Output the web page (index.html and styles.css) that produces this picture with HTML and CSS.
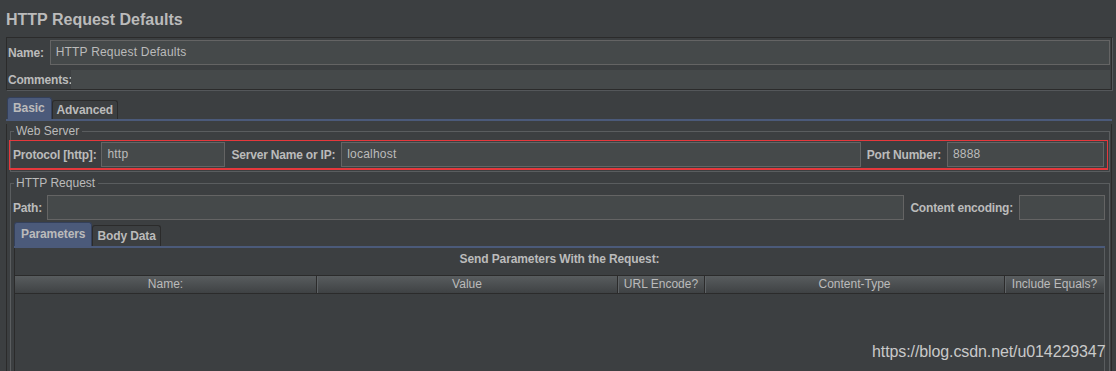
FILE: index.html
```html
<!DOCTYPE html>
<html lang="en">
<head>
    <meta charset="UTF-8">
    <title>HTTP Request Defaults</title>
    <link rel="stylesheet" href="styles.css">
</head>
<body>
    <div class="page">
        <h1 class="title">HTTP Request Defaults</h1>

        <!-- name / comments -->
        <div class="info-panel">
            <div class="field-row name-row">
                <span class="label">Name:</span>
                <div class="text-field">HTTP Request Defaults</div>
            </div>
            <div class="field-row comments-row">
                <span class="label">Comments:</span>
                <div class="comments-area"></div>
            </div>
        </div>

        <div class="tab-strip main-tabs">
            <div class="tab active">Basic</div>
            <div class="tab">Advanced</div>
        </div>

        <div class="tab-body">
            <fieldset class="group web-server">
                <legend>Web Server</legend>
                <div class="field-row server-row">
                    <span class="label">Protocol [http]:</span>
                    <div class="text-field protocol-field">http</div>
                    <span class="label gap-label">Server Name or IP:</span>
                    <div class="text-field server-field">localhost</div>
                    <span class="label gap-label">Port Number:</span>
                    <div class="text-field port-field">8888</div>
                </div>
            </fieldset>

            <fieldset class="group http-request">
                <legend>HTTP Request</legend>
                <div class="field-row path-row">
                    <span class="label">Path:</span>
                    <div class="text-field path-field"></div>
                    <span class="label gap-label">Content encoding:</span>
                    <div class="text-field encoding-field"></div>
                </div>

                <div class="tab-strip sub-tabs">
                    <div class="tab active">Parameters</div>
                    <div class="tab">Body Data</div>
                </div>

                <div class="params">
                    <div class="params-title">Send Parameters With the Request:</div>
                    <div class="table-head">
                        <div class="head-cell">Name:</div>
                        <div class="head-cell">Value</div>
                        <div class="head-cell">URL Encode?</div>
                        <div class="head-cell">Content-Type</div>
                        <div class="head-cell">Include Equals?</div>
                    </div>
                    <div class="table-rows"></div>
                </div>
            </fieldset>
        </div>

        <div class="watermark">https://blog.csdn.net/u014229347</div>
    </div>
</body>
</html>
```

FILE: styles.css
```css
* {
    box-sizing: border-box;
}

body {
    margin: 0;
    height: 371px;
    overflow: hidden;
    background-color: #3c3f41;
    color: #bbbbbb;
    font-family: "Liberation Sans", Arial, sans-serif;
    font-size: 12px;
}

.page {
    position: relative;
    padding: 0 4px 0 6px;
}

.title {
    margin: 0;
    padding-top: 10px;
    font-size: 16px;
    line-height: 20px;
    font-weight: bold;
}

/* name + comments box */
.info-panel {
    margin-top: 7px;
    border: 1px solid #2b2b2b;
    box-shadow: 1px 1px 0 #54575a;
    padding: 2px 1px 0;
}

.field-row {
    display: flex;
    align-items: center;
}

.label {
    font-weight: bold;
    white-space: nowrap;
    letter-spacing: -0.2px;
}

.text-field {
    height: 25px;
    line-height: 23px;
    padding: 0 5px;
    background-color: #45494a;
    border: 1px solid #646464;
    letter-spacing: 0.2px;
    white-space: nowrap;
    overflow: hidden;
}

.name-row .text-field {
    flex: 1;
    margin-left: 6px;
}

.comments-row {
    margin-top: 5px;
    height: 19px;
}
.comments-area {
    flex: 1;
    align-self: stretch;
    margin-left: -1px;
    background-color: #45494a;
}

/* tabs */
.tab-strip {
    display: flex;
    align-items: flex-end;
    border-bottom: 2px solid #4b5a7a;
}

.tab {
    height: 19px;
    line-height: 18px;
    padding: 0 4px;
    font-weight: bold;
    letter-spacing: -0.1px;
    border: 1px solid #2b2b2b;
    border-bottom: none;
    border-radius: 3px 3px 0 0;
}
.tab.active {
    height: 22px;
    line-height: 21px;
    padding: 0 6px 0 5px;
    background-color: #4b5a7a;
    border-color: #34405a;
}

.main-tabs {
    margin-top: 7px;
    padding-left: 1px;
}

.tab-body {
    border-left: 1px solid #2b2b2b;
    border-right: 1px solid #2b2b2b;
    padding: 0 1px 0 3px;
    height: 260px;
}

/* titled borders */
.group {
    min-width: 0;
    margin: 0;
    border: 1px solid #5a5d5f;
}
.group legend {
    margin-left: 3px;
    padding: 0 3px 0 2px;
    line-height: 15px;
}

.web-server {
    margin-top: 3px;
    padding: 1px 0 1px;
}

.server-row {
    margin: 0 1px 0 -2px;
    padding: 1px 3px;
    border: 1px solid #e5383c;
    border-bottom-width: 2px;
}

.gap-label {
    margin-left: 6px;
}
.protocol-field {
    flex: 0 0 124px;
    margin-left: 5px;
}
.server-field {
    flex: 1;
    margin-left: 6px;
}
.port-field {
    flex: 0 0 157px;
    margin-left: 6px;
}

.http-request {
    margin-top: 4px;
    padding: 4px 0 0;
}

.path-row {
    padding: 0 4px 0 2px;
}
.path-field {
    flex: 1;
    margin-left: 5px;
}
.encoding-field {
    flex: 0 0 86px;
    margin-left: 6px;
}

.sub-tabs {
    margin: 2px 4px 0 3px;
}
.sub-tabs .tab {
    height: 21px;
    line-height: 20px;
}
.sub-tabs .tab.active {
    height: 24px;
    line-height: 23px;
    padding: 0 6px;
}

/* parameters table */
.params {
    margin: 0 4px 0 3px;
    border-left: 1px solid #2b2b2b;
    border-right: 1px solid #5a5d5f;
    height: 140px;
}

.params-title {
    padding-top: 4px;
    line-height: 15px;
    text-align: center;
    font-weight: bold;
    letter-spacing: -0.1px;
}

.table-head {
    display: grid;
    grid-template-columns: 301px 301px 87px 300px 1fr;
    margin-top: 8px;
    height: 19px;
    border-top: 1px solid #2b2b2b;
    border-bottom: 1px solid #2b2b2b;
    background: linear-gradient(#585c5e, #3f4244);
}

.head-cell {
    line-height: 17px;
    text-align: center;
    white-space: nowrap;
}
.head-cell + .head-cell {
    border-left: 1px solid #2b2b2b;
    box-shadow: inset 1px 0 0 #5f6366;
}

.watermark {
    position: absolute;
    left: 872px;
    top: 342px;
    font-size: 16px;
    line-height: 19px;
    letter-spacing: -0.1px;
    color: #c9c9c9;
    white-space: nowrap;
}
```
